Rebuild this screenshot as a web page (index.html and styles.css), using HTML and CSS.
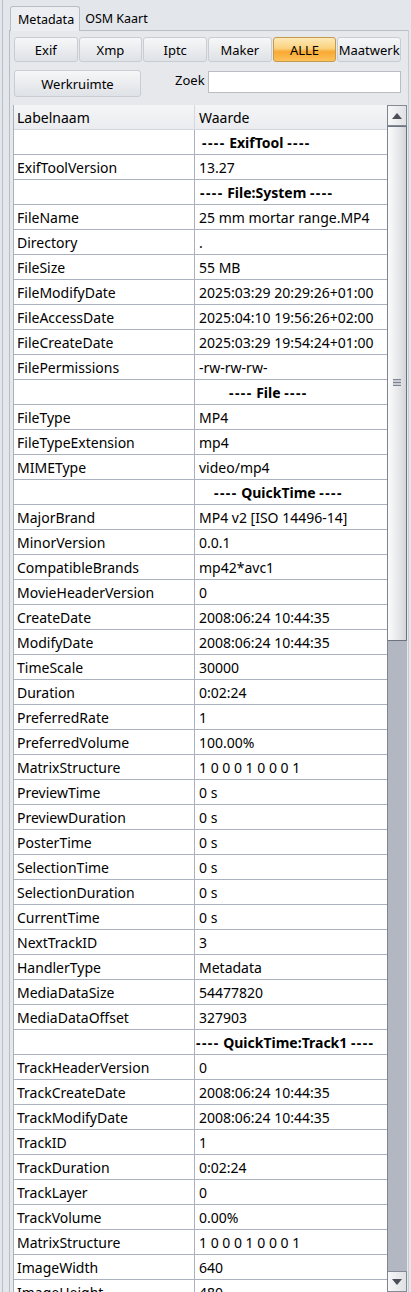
FILE: index.html
```html
<!DOCTYPE html>
<html>
<head>
<meta charset="utf-8">
<link rel="stylesheet" href="styles.css">
</head>
<body>
<div class="app">
  <div class="tabs">
    <div class="tab active">Metadata</div>
    <div class="tab">OSM Kaart</div>
  </div>
  <div class="pane">
    <div class="btnrow">
      <div class="btn">Exif</div>
      <div class="btn">Xmp</div>
      <div class="btn">Iptc</div>
      <div class="btn">Maker</div>
      <div class="btn on">ALLE</div>
      <div class="btn">Maatwerk</div>
    </div>
    <div class="row2">
      <div class="btn wide">Werkruimte</div>
      <label class="zoek">Zoek</label>
      <div class="input"></div>
    </div>
    <div class="grid">
      <div class="table">
        <div class="tr head"><div class="c1">Labelnaam</div><div class="c2">Waarde</div></div>
        <div class="tr sec"><div class="c1"></div><div class="c2 p7"><span class="d">----</span> ExifTool <span class="d">----</span></div></div>
        <div class="tr"><div class="c1">ExifToolVersion</div><div class="c2">13.27</div></div>
        <div class="tr sec"><div class="c1"></div><div class="c2 p5"><span class="d">----</span> File:System <span class="d">----</span></div></div>
        <div class="tr"><div class="c1">FileName</div><div class="c2">25 mm mortar range.MP4</div></div>
        <div class="tr"><div class="c1">Directory</div><div class="c2">.</div></div>
        <div class="tr"><div class="c1">FileSize</div><div class="c2">55 MB</div></div>
        <div class="tr"><div class="c1">FileModifyDate</div><div class="c2">2025:03:29 20:29:26+01:00</div></div>
        <div class="tr"><div class="c1">FileAccessDate</div><div class="c2">2025:04:10 19:56:26+02:00</div></div>
        <div class="tr"><div class="c1">FileCreateDate</div><div class="c2">2025:03:29 19:54:24+01:00</div></div>
        <div class="tr"><div class="c1">FilePermissions</div><div class="c2">-rw-rw-rw-</div></div>
        <div class="tr sec"><div class="c1"></div><div class="c2 p34"><span class="d">----</span> File <span class="d">----</span></div></div>
        <div class="tr"><div class="c1">FileType</div><div class="c2">MP4</div></div>
        <div class="tr"><div class="c1">FileTypeExtension</div><div class="c2">mp4</div></div>
        <div class="tr"><div class="c1">MIMEType</div><div class="c2">video/mp4</div></div>
        <div class="tr sec"><div class="c1"></div><div class="c2 p19"><span class="d">----</span> QuickTime <span class="d">----</span></div></div>
        <div class="tr"><div class="c1">MajorBrand</div><div class="c2">MP4 v2 [ISO 14496-14]</div></div>
        <div class="tr"><div class="c1">MinorVersion</div><div class="c2">0.0.1</div></div>
        <div class="tr"><div class="c1">CompatibleBrands</div><div class="c2">mp42*avc1</div></div>
        <div class="tr"><div class="c1">MovieHeaderVersion</div><div class="c2">0</div></div>
        <div class="tr"><div class="c1">CreateDate</div><div class="c2">2008:06:24 10:44:35</div></div>
        <div class="tr"><div class="c1">ModifyDate</div><div class="c2">2008:06:24 10:44:35</div></div>
        <div class="tr"><div class="c1">TimeScale</div><div class="c2">30000</div></div>
        <div class="tr"><div class="c1">Duration</div><div class="c2">0:02:24</div></div>
        <div class="tr"><div class="c1">PreferredRate</div><div class="c2">1</div></div>
        <div class="tr"><div class="c1">PreferredVolume</div><div class="c2">100.00%</div></div>
        <div class="tr"><div class="c1">MatrixStructure</div><div class="c2">1 0 0 0 1 0 0 0 1</div></div>
        <div class="tr"><div class="c1">PreviewTime</div><div class="c2">0 s</div></div>
        <div class="tr"><div class="c1">PreviewDuration</div><div class="c2">0 s</div></div>
        <div class="tr"><div class="c1">PosterTime</div><div class="c2">0 s</div></div>
        <div class="tr"><div class="c1">SelectionTime</div><div class="c2">0 s</div></div>
        <div class="tr"><div class="c1">SelectionDuration</div><div class="c2">0 s</div></div>
        <div class="tr"><div class="c1">CurrentTime</div><div class="c2">0 s</div></div>
        <div class="tr"><div class="c1">NextTrackID</div><div class="c2">3</div></div>
        <div class="tr"><div class="c1">HandlerType</div><div class="c2">Metadata</div></div>
        <div class="tr"><div class="c1">MediaDataSize</div><div class="c2">54477820</div></div>
        <div class="tr"><div class="c1">MediaDataOffset</div><div class="c2">327903</div></div>
        <div class="tr sec"><div class="c1"></div><div class="c2 p1"><span class="d">----</span> QuickTime:Track1 <span class="d">----</span></div></div>
        <div class="tr"><div class="c1">TrackHeaderVersion</div><div class="c2">0</div></div>
        <div class="tr"><div class="c1">TrackCreateDate</div><div class="c2">2008:06:24 10:44:35</div></div>
        <div class="tr"><div class="c1">TrackModifyDate</div><div class="c2">2008:06:24 10:44:35</div></div>
        <div class="tr"><div class="c1">TrackID</div><div class="c2">1</div></div>
        <div class="tr"><div class="c1">TrackDuration</div><div class="c2">0:02:24</div></div>
        <div class="tr"><div class="c1">TrackLayer</div><div class="c2">0</div></div>
        <div class="tr"><div class="c1">TrackVolume</div><div class="c2">0.00%</div></div>
        <div class="tr"><div class="c1">MatrixStructure</div><div class="c2">1 0 0 0 1 0 0 0 1</div></div>
        <div class="tr"><div class="c1">ImageWidth</div><div class="c2">640</div></div>
        <div class="tr"><div class="c1">ImageHeight</div><div class="c2">480</div></div>
      </div>
      <div class="vscroll">
        <div class="arrow up"><svg width="10" height="6" viewBox="0 0 10 6"><path d="M0 6 L5 0 L10 6 Z" fill="#4a4f57"/></svg></div>
        <div class="thumb"><span class="grip"></span></div>
        <div class="track"></div>
        <div class="arrow down"><svg width="10" height="6" viewBox="0 0 10 6"><path d="M0 0 L5 6 L10 0 Z" fill="#4a4f57"/></svg></div>
      </div>
    </div>
  </div>
</div>
</body>
</html>
```
FILE: styles.css
```css
html, body {
  margin: 0;
  padding: 0;
}
body {
  width: 411px;
  height: 1292px;
  overflow: hidden;
  background: #e3e6ea;
  font-family: "Noto Sans", "Open Sans", sans-serif;
  color: #000;
}
.app {
  margin-left: 2px;
  border-left: 1px solid #b9bec6;
  padding-left: 6px;
  height: 1292px;
  box-sizing: border-box;
}
.tabs {
  display: flex;
  padding-top: 6px;
  height: 24px;
  position: relative;
  z-index: 1;
}
.tab {
  font-size: 12.5px;
  line-height: 25px;
  padding: 0 5px;
  height: 24px;
}
.tab.active {
  margin-left: 1px;
  padding: 0 5px 0 7px;
  height: 25px;
  border: 1px solid #b9bec6;
  border-bottom: none;
  border-radius: 3px 3px 0 0;
  background: #eceef1;
  box-sizing: border-box;
  line-height: 25px;
}
.pane {
  border: 1px solid #b9bec6;
  border-right-color: #c9cdd3;
  background: #e6e8ec;
  padding: 6px 1px 0 4px;
  height: 1300px;
  box-sizing: border-box;
  width: 400px;
}
.btnrow {
  display: grid;
  grid-template-columns: repeat(6, 1fr);
  gap: 1px;
  margin-right: 6px;
  height: 25px;
}
.btn {
  box-sizing: border-box;
  height: 25px;
  border: 1px solid #c8ccd3;
  border-radius: 3px;
  background: linear-gradient(#f6f7f8, #e9ebee 55%, #dfe2e6);
  font-size: 13px;
  line-height: 24px;
  text-align: center;
  white-space: nowrap;
}
.btn.on {
  border-color: #c49a4e;
  background: linear-gradient(#fde9b8, #fbd27e 45%, #f9a933 60%, #fdc25a);
}
.row2 {
  display: flex;
  align-items: flex-start;
  margin-top: 8px;
  height: 27px;
  margin-right: 6px;
}
.btn.wide {
  width: 127px;
  height: 27px;
  line-height: 27px;
}
.zoek {
  font-size: 13px;
  margin-left: 34px;
  line-height: 20px;
  margin-right: 3px;
}
.input {
  flex: 1;
  height: 22px;
  margin-top: 1px;
  box-sizing: border-box;
  border: 1px solid #b9bec6;
  background: #fff;
}
.grid {
  display: flex;
  margin-top: 8px;
  margin-left: -1px;
  height: 1187px;
}
.table {
  width: 374px;
  border-left: 1px solid #a9b1bd;
  background: #fff;
  overflow: hidden;
  font-size: 14px;
}
.tr {
  display: flex;
  height: 25px;
  box-sizing: border-box;
  border-bottom: 1px solid #a9b2be;
  white-space: nowrap;
}
.tr.head {
  background: linear-gradient(#f4f5f7, #eaecef);
  border-bottom-color: #d4d8de;
}
.c1, .c2 {
  line-height: 26px;
  overflow: hidden;
}
.c1 {
  width: 181px;
  box-sizing: border-box;
  border-right: 1px solid #a9b2be;
  padding-left: 3px;
}
.c2 {
  flex: 1;
  padding-left: 4px;
}
.head .c1 { border-right-color: #d4d8de; }
.sec .c2 { font-weight: bold; }
.d { letter-spacing: 1.4px; }
.p1 { padding-left: 1px; }
.p5 { padding-left: 5px; }
.p7 { padding-left: 7px; }
.p19 { padding-left: 19px; }
.p34 { padding-left: 34px; }
.vscroll {
  width: 20px;
  display: flex;
  flex-direction: column;
  background: #b3b7c1;
  border-left: 1px solid #7d8591;
  box-sizing: border-box;
}
.arrow {
  height: 21px;
  box-sizing: border-box;
  border: 1px solid #848b96;
  border-left: none;
  background: linear-gradient(90deg, #f7f7f8, #dfe1e4);
  display: flex;
  align-items: center;
  justify-content: center;
}
.thumb {
  height: 515px;
  box-sizing: border-box;
  border: 1px solid #6c7480;
  border-left: none;
  background: linear-gradient(90deg, #fbfbfb, #e6e7e9 60%, #d2d4d8);
  position: relative;
}
.grip {
  position: absolute;
  left: 5px;
  top: 252px;
  width: 8px;
  height: 7px;
  background: repeating-linear-gradient(#7d8591 0 1px, #c9ccd2 1px 3px);
}
.track {
  flex: 1;
}
```
